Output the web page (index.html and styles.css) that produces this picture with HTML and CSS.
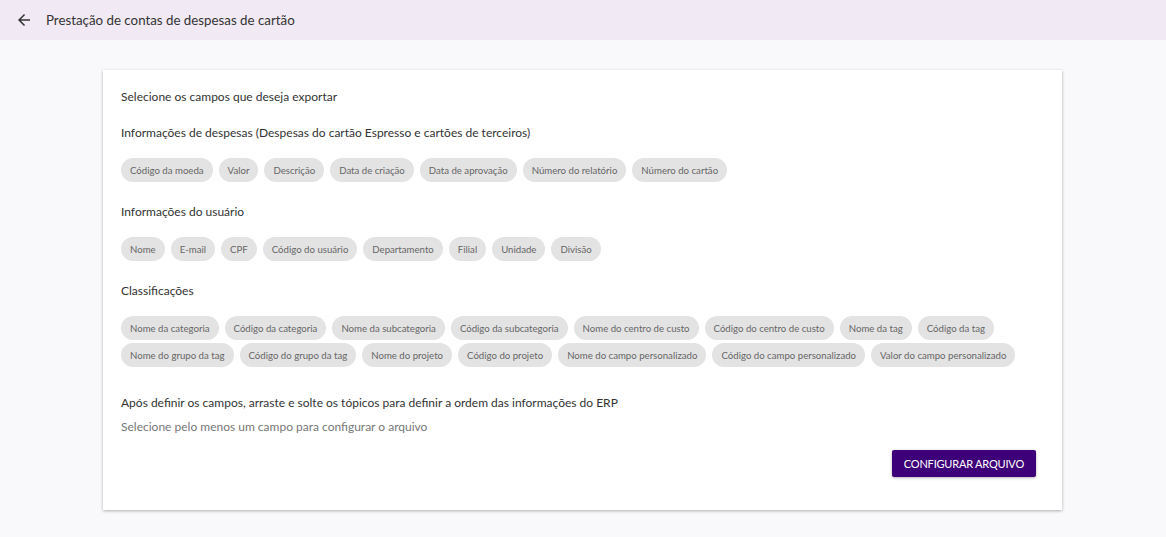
FILE: index.html
```html
<!DOCTYPE html>
<html lang="pt-BR">
<head>
<meta charset="utf-8">
<title>Prestação de contas de despesas de cartão</title>
<link rel="stylesheet" href="styles.css">
</head>
<body>
<header class="topbar">
  <button class="back" aria-label="Voltar">
    <svg viewBox="0 0 24 24" width="18" height="18"><path d="M20 11H7.83l5.59-5.59L12 4l-8 8 8 8 1.41-1.41L7.83 13H20v-2z" fill="#333"/></svg>
  </button>
  <h1 class="title">Prestação de contas de despesas de cartão</h1>
</header>
<main class="page">
  <section class="card">
    <p class="lead">Selecione os campos que deseja exportar</p>

    <h2 class="group-title">Informações de despesas (Despesas do cartão Espresso e cartões de terceiros)</h2>
    <div class="chips">
      <span class="chip">Código da moeda</span>
      <span class="chip">Valor</span>
      <span class="chip">Descrição</span>
      <span class="chip">Data de criação</span>
      <span class="chip">Data de aprovação</span>
      <span class="chip">Número do relatório</span>
      <span class="chip">Número do cartão</span>
    </div>

    <h2 class="group-title">Informações do usuário</h2>
    <div class="chips">
      <span class="chip">Nome</span>
      <span class="chip">E-mail</span>
      <span class="chip">CPF</span>
      <span class="chip">Código do usuário</span>
      <span class="chip">Departamento</span>
      <span class="chip">Filial</span>
      <span class="chip">Unidade</span>
      <span class="chip">Divisão</span>
    </div>

    <h2 class="group-title">Classificações</h2>
    <div class="chips">
      <span class="chip">Nome da categoria</span>
      <span class="chip">Código da categoria</span>
      <span class="chip">Nome da subcategoria</span>
      <span class="chip">Código da subcategoria</span>
      <span class="chip">Nome do centro de custo</span>
      <span class="chip">Código do centro de custo</span>
      <span class="chip">Nome da tag</span>
      <span class="chip">Código da tag</span>
      <span class="chip">Nome do grupo da tag</span>
      <span class="chip">Código do grupo da tag</span>
      <span class="chip">Nome do projeto</span>
      <span class="chip">Código do projeto</span>
      <span class="chip">Nome do campo personalizado</span>
      <span class="chip">Código do campo personalizado</span>
      <span class="chip">Valor do campo personalizado</span>
    </div>

    <p class="order-title">Após definir os campos, arraste e solte os tópicos para definir a ordem das informações do ERP</p>
    <p class="hint">Selecione pelo menos um campo para configurar o arquivo</p>

    <div class="actions">
      <button class="primary">CONFIGURAR ARQUIVO</button>
    </div>
  </section>
</main>
</body>
</html>
```

FILE: styles.css
```css
* { box-sizing: border-box; }
html, body { margin: 0; padding: 0; }
body {
  font-family: Lato, "Open Sans", sans-serif;
  background: #f9f9fc;
  color: #333;
  min-height: 537px;
}
.topbar {
  height: 40px;
  background: #f1eaf5;
  display: flex;
  align-items: center;
  padding-left: 14px;
}
.back {
  border: 0;
  background: none;
  padding: 0;
  width: 20px;
  height: 20px;
  display: flex;
  align-items: center;
  justify-content: center;
  cursor: pointer;
}
.title {
  margin: 0 0 0 12px;
  font-size: 13.3px;
  font-weight: 400;
  color: #333;
}
.page {
  padding: 30px 104px 0 103px;
}
.card {
  background: #fff;
  box-shadow: 0 1px 3px rgba(0,0,0,0.3);
  padding: 18px 26px 33px 18px;
  width: 959px;
  height: 440px;
}
.lead, .group-title, .order-title {
  margin: 0;
  font-size: 12px;
  font-weight: 400;
  color: #333;
  line-height: 18px;
}
.lead { margin-bottom: 18px; }
.group-title { margin-bottom: 16px; }
.chips {
  display: flex;
  flex-wrap: wrap;
  gap: 3px 6px;
  margin-bottom: 21px;
}
.chip {
  height: 24px;
  line-height: 24px;
  padding: 0 9px;
  border-radius: 12px;
  background: #e3e3e3;
  color: #666;
  font-size: 9.65px;
  white-space: nowrap;
}
.chips:last-of-type { margin-bottom: 0; }
.order-title { margin-top: 27px; }
.hint {
  margin: 6px 0 0;
  font-size: 12px;
  line-height: 18px;
  color: #777;
}
.actions {
  display: flex;
  justify-content: flex-end;
  margin-top: 14px;
}
.primary {
  background: #3e0078;
  color: #fff;
  border: 0;
  border-radius: 2px;
  height: 27px;
  padding: 0 12px;
  font-family: Lato, sans-serif;
  font-size: 11px;
  letter-spacing: -0.2px;
  box-shadow: 0 1px 3px rgba(0,0,0,0.3);
}
```
